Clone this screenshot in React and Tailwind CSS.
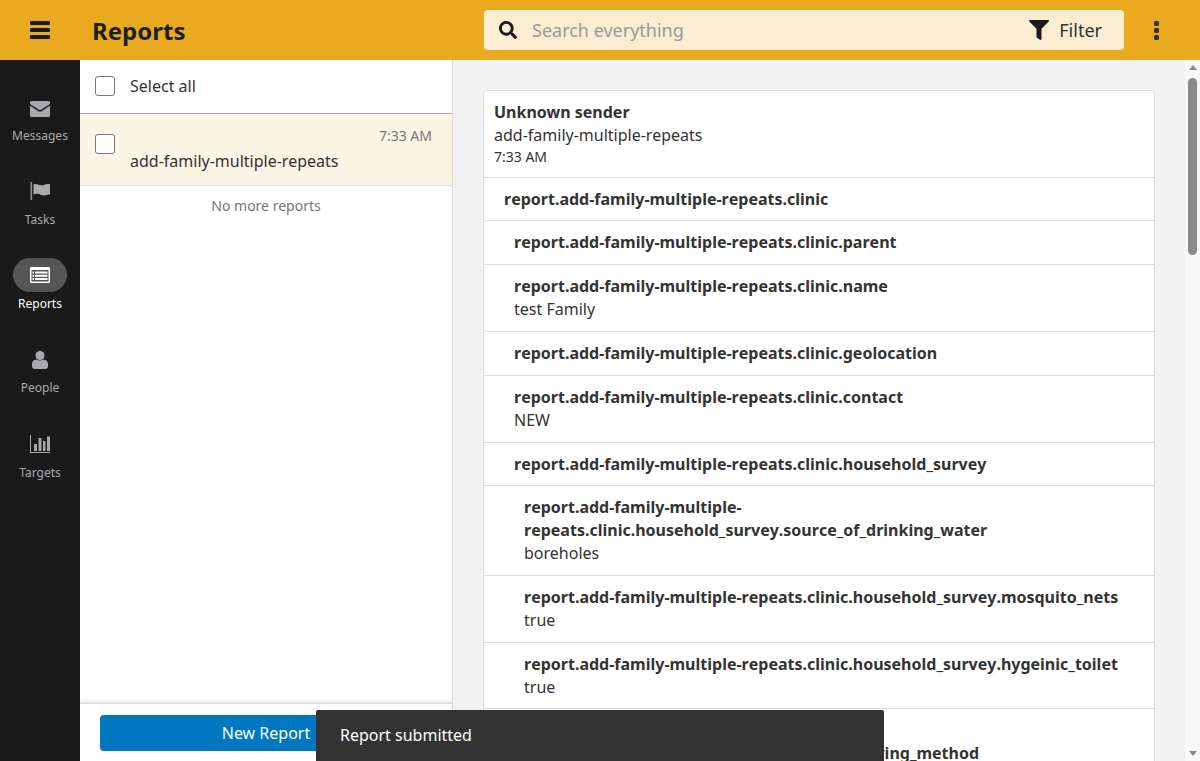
import { FaSearch, FaFilter } from "react-icons/fa";

function EnvelopeIcon() {
  return (
    <svg className="mt-[3px]" width="20" height="16" viewBox="0 0 20 16">
      <path d="M1.5 0h17A1.5 1.5 0 0 1 20 1.5V3l-8.6 5.6a2.6 2.6 0 0 1-2.8 0L0 3V1.5A1.5 1.5 0 0 1 1.5 0z" fill="#a9aaae" />
      <path d="M0 4.6l8 5.3a3.6 3.6 0 0 0 4 0l8-5.3v9.9a1.5 1.5 0 0 1-1.5 1.5h-17A1.5 1.5 0 0 1 0 14.500z" fill="#a9aaae" />
    </svg>
  );
}

function FlagIcon() {
  return (
    <svg width="20" height="18" viewBox="0 0 20 18">
      <rect x="0.5" y="0" width="1.6" height="18" fill="#8f9094" />
      <path d="M3.500 2.500c3-1.500 5 .8 8 .8 2.500 0 4-1 5.500-1.300 1-.2 2 0 3 0v10.500c-2.500-.5-4 1-6.500 1-3 0-4-2-7-1.700-1.200.1-2.300.5-3 1z" fill="#a9aaae" />
    </svg>
  );
}

function ReportsIcon() {
  return (
    <svg width="20" height="16" viewBox="0 0 20 16">
      <rect width="20" height="16" rx="1" fill="#fff" />
      <rect x="1.500" y="3" width="17" height="11.500" fill="#555" />
      <rect x="5" y="4.500" width="12.500" height="2" fill="#fff" />
      <rect x="5" y="7.800" width="12.500" height="2" fill="#fff" />
      <rect x="5" y="11" width="12.500" height="2" fill="#fff" />
      <rect x="2.500" y="4.500" width="1.500" height="2" fill="#fff" />
      <rect x="2.500" y="7.800" width="1.500" height="2" fill="#fff" />
      <rect x="2.500" y="11" width="1.500" height="2" fill="#fff" />
    </svg>
  );
}

function PersonIcon() {
  return (
    <svg className="mt-[1px]" width="16" height="18" viewBox="0 0 16 18">
      <circle cx="8" cy="4.500" r="4.500" fill="#a9aaae" />
      <path d="M4.500 8.500c2 1.300 5 1.300 7 0 2.500.3 4.500 1.800 4.500 4V15a3 3 0 0 1-3 3H3a3 3 0 0 1-3-3v-2.500c0-2.200 2-3.700 4.500-4z" fill="#a9aaae" />
    </svg>
  );
}

function TargetsIcon() {
  return (
    <svg width="20" height="18" viewBox="0 0 20 18">
      <path d="M0 0h1v17h19v1H0z" fill="#a9aaae" />
      <rect x="4" y="9" width="3" height="7" fill="#a9aaae" />
      <rect x="8.500" y="3" width="3" height="13" fill="#a9aaae" />
      <rect x="13" y="6" width="2.500" height="10" fill="#a9aaae" />
      <rect x="17" y="1.500" width="3" height="14.500" fill="#a9aaae" />
    </svg>
  );
}

const navItems = [
  { label: "Messages", icon: <EnvelopeIcon /> },
  { label: "Tasks", icon: <FlagIcon /> },
  { label: "Reports", icon: <ReportsIcon />, active: true },
  { label: "People", icon: <PersonIcon /> },
  { label: "Targets", icon: <TargetsIcon />, nudge: true },
];

const fields = [
  { level: 0, name: "report.add-family-multiple-repeats.clinic" },
  { level: 1, name: "report.add-family-multiple-repeats.clinic.parent" },
  { level: 1, name: "report.add-family-multiple-repeats.clinic.name", value: "test Family" },
  { level: 1, name: "report.add-family-multiple-repeats.clinic.geolocation" },
  { level: 1, name: "report.add-family-multiple-repeats.clinic.contact", value: "NEW" },
  { level: 1, name: "report.add-family-multiple-repeats.clinic.household_survey" },
  { level: 2, name: "report.add-family-multiple-repeats.clinic.household_survey.source_of_drinking_water", value: "boreholes" },
  { level: 2, name: "report.add-family-multiple-repeats.clinic.household_survey.mosquito_nets", value: "true" },
  { level: 2, name: "report.add-family-multiple-repeats.clinic.household_survey.hygeinic_toilet", value: "true" },
  { level: 2, name: "report.add-family-multiple-repeats.clinic.household_survey.water_purifying_method" },
];

function Checkbox() {
  return <div className="w-5 h-5 shrink-0 bg-white border border-[#777] rounded-[3px]"></div>;
}

function FieldRow({ level, name, value }) {
  const indent = level === 0 ? "pl-[20px]" : level === 1 ? "pl-[30px]" : "pl-[40px]";
  return (
    <div className={`${indent} pr-[10px] py-[10px] border-t border-[#dddddd] leading-[22.857px]`}>
      <div className="font-bold text-[#333] [font-kerning:none]">{name}</div>
      {value && <div>{value}</div>}
    </div>
  );
}

export default function App() {
  return (
    <div className="relative h-[761px] flex flex-col overflow-hidden text-[#333] text-[16px] font-['Noto_Sans',sans-serif]">
      {/* HEADER */}
      <header className="h-[60px] shrink-0 flex items-center bg-[#e9aa20]">
        <div className="w-[80px] flex flex-col items-center gap-[3px]">
          <div className="w-5 h-[4px] bg-[#1a1a1a] rounded-[1px]"></div>
          <div className="w-5 h-[4px] bg-[#1a1a1a] rounded-[1px]"></div>
          <div className="w-5 h-[4px] bg-[#1a1a1a] rounded-[1px]"></div>
        </div>
        <h1 className="w-[404px] pl-3 pt-[1px] text-[24px] font-bold text-[#1f1f1f]">Reports</h1>
        <div className="w-[640px] h-10 flex items-center bg-[#fbedd2] rounded-[4px] pl-[15px] pr-[22px]">
          <FaSearch className="text-[#1a1a1a] text-[18px]" />
          <span className="ml-[15px] flex-1 text-[18px] text-[#999]">Search everything</span>
          <FaFilter className="text-[#1a1a1a] text-[20px]" />
          <span className="ml-[10px] text-[18px]">Filter</span>
        </div>
        <div className="w-[64px] flex flex-col items-center gap-[2px]">
          <div className="w-[5px] h-[5px] bg-[#333] rounded-[1.500px]"></div>
          <div className="w-[5px] h-[5px] bg-[#333] rounded-[1.500px]"></div>
          <div className="w-[5px] h-[5px] bg-[#333] rounded-[1.500px]"></div>
        </div>
      </header>

      <div className="flex-1 flex min-h-0">
        {/* SIDEBAR */}
        <nav className="w-[80px] shrink-0 bg-[#1a1a1a] pt-[30px]">
          {navItems.map(item => (
            <div key={item.label} className={`h-[84px] flex flex-col items-center ${item.nudge ? "mt-[1px]" : ""}`}>
              <div className={`w-[54px] h-[34px] flex items-center justify-center rounded-full ${item.active ? "bg-[#555]" : ""}`}>
                {item.icon}
              </div>
              <span className={`mt-[2px] text-[12px] leading-[20px] ${item.active ? "text-white" : "text-[#a9aaae]"}`}>
                {item.label}
              </span>
            </div>
          ))}
        </nav>

        {/* REPORT LIST */}
        <section className="w-[373px] shrink-0 flex flex-col bg-white border-r border-[#dddddd]">
          <div className="h-[54px] shrink-0 flex items-center gap-[15px] pl-[15px] pb-[2px] border-b border-[#aaaaaa]">
            <Checkbox />
            <span>Select all</span>
          </div>
          <div className="h-[72px] shrink-0 flex gap-[15px] pl-[15px] pr-[20px] pt-[20px] bg-[#fbf5e6] border-b border-[#dddddd]">
            <Checkbox />
            <div className="flex-1">
              <div className="-mt-[8px] text-right text-[14px] leading-[20px] text-[#777]">7:33 AM</div>
              <div className="mt-[4px] leading-[22.857px]">add-family-multiple-repeats</div>
            </div>
          </div>
          <div className="flex-1 pt-[10px] text-center text-[14px] leading-[20px] text-[#777]">No more reports</div>
          <div className="h-[58px] shrink-0 px-[20px] pt-[11px] border-t border-[#dddddd] shadow-[0_-2px_3px_rgba(0,0,0,0.1)]">
            <button className="w-full h-[36px] bg-[#0077c0] text-white rounded-[4px]">New Report</button>
          </div>
        </section>

        {/* REPORT DETAIL */}
        <main className="flex-1 min-w-0 overflow-hidden bg-[#f2f2f2] pt-[30px] pl-[30px] pr-[30px]">
          <div className="bg-white border border-[#dddddd] rounded-[4px]">
            <div className="h-[85.5px] px-[10px] pt-[10px]">
              <div className="font-bold leading-[22.857px]">Unknown sender</div>
              <div className="leading-[22.857px]">add-family-multiple-repeats</div>
              <div className="text-[14px] leading-[20px]">7:33 AM</div>
            </div>
            {fields.map(f => (
              <FieldRow key={f.name} level={f.level} name={f.name} value={f.value} />
            ))}
          </div>
        </main>

        {/* SCROLLBAR */}
        <div className="w-[15px] shrink-0 flex flex-col items-center bg-[#f8f8f8]">
          <div className="mt-[5px] w-0 h-0 border-x-[4px] border-x-transparent border-b-[5px] border-b-[#8a8a8a]"></div>
          <div className="mt-[8px] w-[9px] h-[177px] bg-[#8a8a8a] rounded-full"></div>
          <div className="mt-auto mb-[5px] w-0 h-0 border-x-[4px] border-x-transparent border-t-[5px] border-t-[#8a8a8a]"></div>
        </div>
      </div>

      {/* TOAST */}
      <div className="absolute left-[316px] bottom-0 w-[568px] h-[51px] flex items-center pl-[24px] pb-[2px] bg-[#333] text-white rounded-t-[2px]">
        Report submitted
      </div>
    </div>
  );
}
